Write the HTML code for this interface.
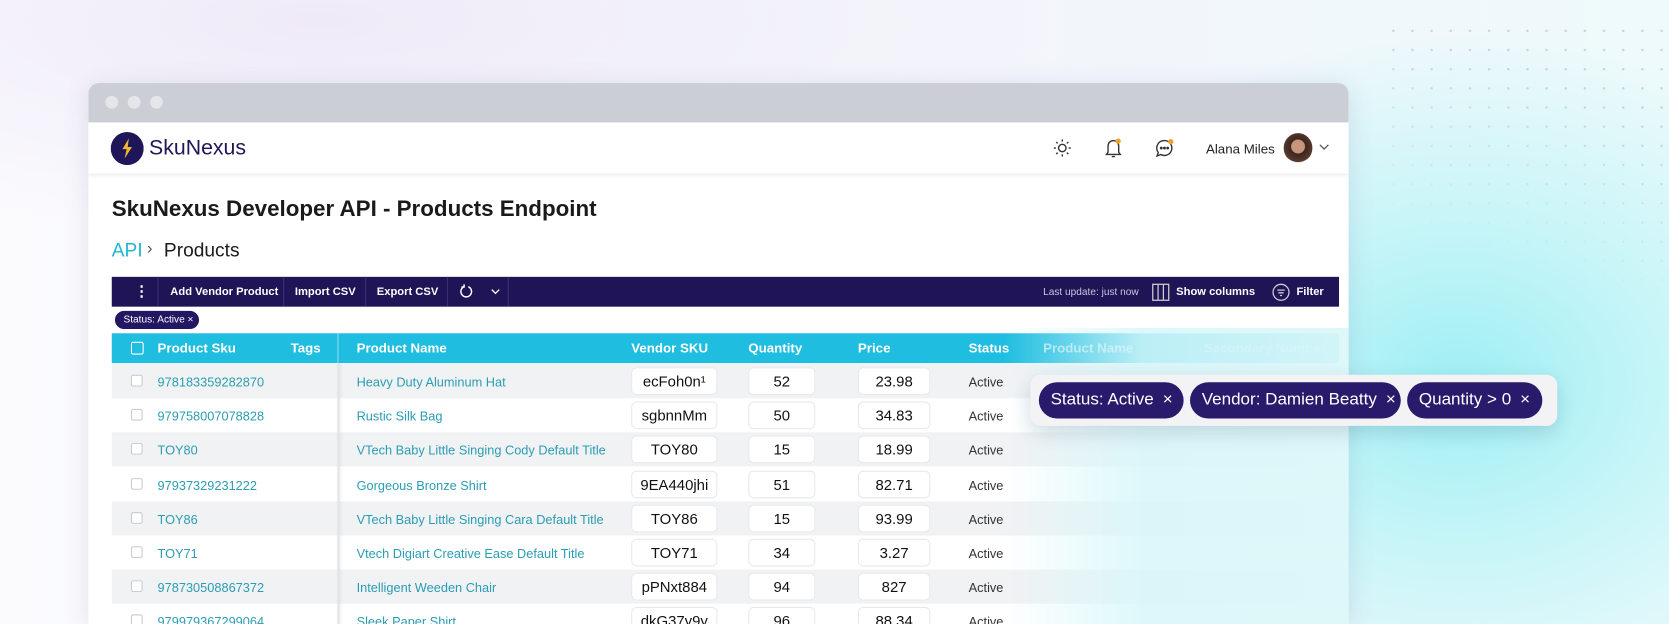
<!DOCTYPE html>
<html><head><meta charset="utf-8"><style>
*{margin:0;padding:0;box-sizing:border-box}
html,body{width:1669px;height:624px;overflow:hidden;background:#fff}
#s{position:absolute;left:0;top:0;width:1568px;height:586px;transform:scale(1.06441,1.0648);transform-origin:0 0;font-family:"Liberation Sans",sans-serif;overflow:hidden;
background:radial-gradient(ellipse 420px 330px at 1370px 360px,#9eeff4 0%,#c6f5f8 45%,rgba(230,250,252,0) 100%),radial-gradient(ellipse 700px 200px at 300px 20px,#efeaf8,rgba(255,255,255,0)),linear-gradient(90deg,#fbfbfe,#f3f5fb 60%,#eefafb)}
.a{position:absolute}
.dots{left:1300px;top:20px;width:268px;height:260px;background-image:radial-gradient(circle,#c8d3dc 1px,transparent 1.3px);background-size:18px 18px;-webkit-mask-image:linear-gradient(200deg,#000 30%,transparent 80%)}
.win{left:83px;top:78px;width:1184px;height:508px;border-radius:10px 10px 0 0;background:#fff;box-shadow:0 4px 24px rgba(80,80,140,.15);overflow:hidden}
.tb{left:0;top:0;width:100%;height:37px;background:#cbcfd5}
.dot{width:12px;height:12px;border-radius:50%;background:#e4e6ea;top:12px}
.hdr{left:0;top:37px;width:100%;height:48px;background:#fff;box-shadow:0 2px 4px rgba(0,0,0,.08)}
.t{white-space:nowrap}
.tool{left:22px;top:182px;width:1153px;height:28px;background:#1e1456;color:#fff;font-size:10.5px;font-weight:bold}
.tool .t{top:8px}
.sep{top:0;width:1px;height:28px;background:#3a3175}
.chip{background:#231764;color:#fff;border-radius:20px}
.th{left:22px;top:235px;width:1153px;height:28px;background:#1fbde0;color:#fff;font-size:12.5px;font-weight:bold}
.th .t{top:7px}
.row{left:22px;width:1153px;height:32px;font-size:12px}
.g{background:#f1f2f4}
.cb{width:11px;height:11px;border:1px solid #c9ccd0;border-radius:2px;background:#fff;left:18px;top:10px}
.lk{color:#2b9db3;top:10px}
.box{top:3px;height:26px;background:#fff;border:1px solid #e7e9ec;border-radius:5px;font-size:14px;color:#111;text-align:center;line-height:24px}
.fade{left:860px;top:230px;width:324px;height:320px;background:linear-gradient(90deg,rgba(225,248,250,0),rgba(215,247,250,.85) 40%,rgba(220,248,250,.95))}
.panel{left:968px;top:352px;width:495px;height:48px;background:#f3f3f6;border-radius:10px;box-shadow:0 6px 18px rgba(40,60,90,.18)}
.bc{top:7px;height:34px;background:#291a6c;color:#fff;font-size:16px;border-radius:18px;line-height:34px;padding-left:11px}
</style></head><body><div id="s">
<div class="a dots"></div>
<div class="a win">
 <div class="a tb"></div>
 <div class="a dot" style="left:16px"></div><div class="a dot" style="left:37px"></div><div class="a dot" style="left:58px"></div>
 <div class="a hdr">
  <svg class="a" style="left:21px;top:9px" width="31" height="31" viewBox="0 0 31 31"><circle cx="15.5" cy="15.5" r="15.5" fill="#1e1658"/><path d="M17 6 L11 16 L15 16 L13 25 L20 14 L16 14 Z" fill="#f2b632"/></svg>
  <div class="a t" style="left:57px;top:13px;font-size:20px;color:#1e1658">SkuNexus</div>
  <svg class="a" style="left:906px;top:15px" width="18" height="18" viewBox="0 0 18 18" fill="none" stroke="#333" stroke-width="1.3"><circle cx="9" cy="9" r="3.5"/><path d="M9 1v2M9 15v2M1 9h2M15 9h2M3.3 3.3l1.4 1.4M13.3 13.3l1.4 1.4M3.3 14.7l1.4-1.4M13.3 4.7l1.4-1.4"/></svg>
  <svg class="a" style="left:954px;top:14px" width="18" height="20" viewBox="0 0 18 20" fill="none" stroke="#333" stroke-width="1.3"><path d="M4 14V8a5 5 0 0110 0v6l1.5 2h-13z"/><path d="M7.5 18h3"/><circle cx="13.5" cy="3.5" r="2.5" fill="#f0a030" stroke="none"/></svg>
  <svg class="a" style="left:1001px;top:14px" width="20" height="20" viewBox="0 0 20 20" fill="none" stroke="#333" stroke-width="1.3"><path d="M10 3a7 7 0 1 1-3.5 13.1L3 17.5l1.2-3.3A7 7 0 0 1 10 3z"/><circle cx="7" cy="10" r=".7" fill="#333"/><circle cx="10" cy="10" r=".7" fill="#333"/><circle cx="13" cy="10" r=".7" fill="#333"/><circle cx="16" cy="4" r="2.5" fill="#f0a030" stroke="none"/></svg>
  <div class="a t" style="left:1050px;top:18px;font-size:12.5px;color:#222">Alana Miles</div>
  <div class="a" style="left:1123px;top:10px;width:27px;height:28px;border-radius:50%;background:radial-gradient(circle at 50% 45%,#c9957a 0 30%,#3a2620 34%,#5a3a2e 70%,#ddd 72%)"></div>
  <svg class="a" style="left:1156px;top:20px" width="10" height="7" viewBox="0 0 10 7" fill="none" stroke="#555" stroke-width="1.2"><path d="M1 1l4 4 4-4"/></svg>
 </div>
 <div class="a t" style="left:22px;top:107px;font-size:21px;font-weight:bold;color:#1a1a1a">SkuNexus Developer API - Products Endpoint</div>
 <div class="a t" style="left:22px;top:147px;font-size:18px;color:#1fb7d4">API</div>
 <div class="a t" style="left:55px;top:147px;font-size:16px;color:#555">›</div>
 <div class="a t" style="left:71px;top:147px;font-size:18px;color:#1a1a1a">Products</div>
 <div class="a tool">
  <div class="a t" style="left:21px;top:5px;font-size:14px">⋮</div>
  <div class="a sep" style="left:43px"></div>
  <div class="a t" style="left:55px">Add Vendor Product</div>
  <div class="a sep" style="left:161px"></div>
  <div class="a t" style="left:172px">Import CSV</div>
  <div class="a sep" style="left:238px"></div>
  <div class="a t" style="left:249px">Export CSV</div>
  <div class="a sep" style="left:315px"></div>
  <svg class="a" style="left:326px;top:7px" width="14" height="14" viewBox="0 0 14 14" fill="none" stroke="#fff" stroke-width="1.4"><path d="M9 2.2A5 5 0 1 1 5 2.2"/><path d="M5 0v2.5H2.5"/></svg>
  <svg class="a" style="left:356px;top:11px" width="9" height="6" viewBox="0 0 9 6" fill="none" stroke="#fff" stroke-width="1.2"><path d="M1 1l3.5 3.5L8 1"/></svg>
  <div class="a sep" style="left:372px"></div>
  <div class="a t" style="left:875px;top:9px;font-size:9.5px;font-weight:normal;color:#c8c6e0">Last update: just now</div>
  <svg class="a" style="left:977px;top:6px" width="17" height="17" viewBox="0 0 17 17" fill="none" stroke="#ccc" stroke-width="1.2"><rect x="1" y="1" width="15" height="15"/><path d="M6 1v15M11 1v15"/></svg>
  <div class="a t" style="left:1000px">Show columns</div>
  <svg class="a" style="left:1090px;top:6px" width="17" height="17" viewBox="0 0 17 17" fill="none" stroke="#ccc" stroke-width="1.2"><circle cx="8.5" cy="8.5" r="7.5"/><path d="M5 6.5h7M6 9h5M7.5 11.5h2"/></svg>
  <div class="a t" style="left:1113px">Filter</div>
 </div>
 <div class="a chip t" style="left:25px;top:214px;width:79px;height:17px;font-size:9.5px;line-height:17px;padding-left:8px">Status: Active ×</div>
 <div class="a th">
  <div class="a" style="left:18px;top:8px;width:12px;height:12px;border:1.3px solid #fff;border-radius:2px"></div>
  <div class="a t" style="left:43px">Product Sku</div><div class="a t" style="left:168px">Tags</div>
  <div class="a" style="left:212px;top:0;width:1px;height:28px;background:#8fdcee"></div>
  <div class="a t" style="left:230px">Product Name</div><div class="a t" style="left:488px">Vendor SKU</div>
  <div class="a t" style="left:598px">Quantity</div><div class="a t" style="left:701px">Price</div>
  <div class="a t" style="left:805px">Status</div><div class="a t" style="left:875px;opacity:.6">Product Name</div>
  <div class="a t" style="left:1026px;opacity:.4">Secondary Number</div>
 </div>
 <div id="rows"></div>
 <div class="a" style="left:234px;top:263px;width:2px;height:290px;background:#e2e4e7;box-shadow:1px 0 3px rgba(0,0,0,.08)"></div>
 <div class="a fade"></div>
</div>
<div class="a panel">
 <div class="a bc t" style="left:8px;width:136px">Status: Active <span style="margin-left:4px">×</span></div>
 <div class="a bc t" style="left:150px;width:198px">Vendor: Damien Beatty <span style="margin-left:4px">×</span></div>
 <div class="a bc t" style="left:354px;width:127px">Quantity &gt; 0 <span style="margin-left:4px">×</span></div>
</div>
</div>
<script>
var d=[["978183359282870","Heavy Duty Aluminum Hat","ecFoh0n¹","52","23.98"],["979758007078828","Rustic Silk Bag","sgbnnMm","50","34.83"],["TOY80","VTech Baby Little Singing Cody Default Title","TOY80","15","18.99"],["97937329231222","Gorgeous Bronze Shirt","9EA440jhi","51","82.71"],["TOY86","VTech Baby Little Singing Cara Default Title","TOY86","15","93.99"],["TOY71","Vtech Digiart Creative Ease Default Title","TOY71","34","3.27"],["978730508867372","Intelligent Weeden Chair","pPNxt884","94","827"],["979979367299064","Sleek Paper Shirt","dkG37y9y","96","88.34"]];
var h="";d.forEach(function(r,i){h+='<div class="a row'+(i%2==0?' g':'')+'" style="top:'+(264+i*32.2)+'px"><div class="a cb"></div><div class="a t lk" style="left:43px">'+r[0]+'</div><div class="a t lk" style="left:230px">'+r[1]+'</div><div class="a box" style="left:488px;width:81px">'+r[2]+'</div><div class="a box" style="left:598px;width:63px">'+r[3]+'</div><div class="a box" style="left:701px;width:68px">'+r[4]+'</div><div class="a t" style="left:805px;top:10px;color:#333">Active</div></div>';});
document.getElementById("rows").outerHTML=h;
</script>
</body></html>
